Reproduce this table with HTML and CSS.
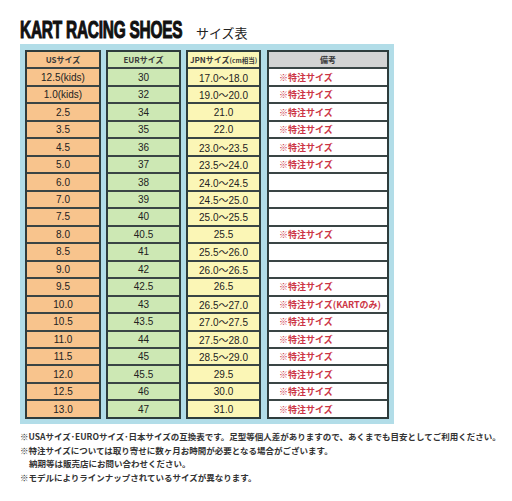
FILE: index.html
```html
<!DOCTYPE html>
<html lang="ja">
<head>
<meta charset="utf-8">
<title>KART RACING SHOES サイズ表</title>
<link rel="stylesheet" href="styles.css">
</head>
<body>
<div class="page">
  <div class="head">
    <h1 class="title"><span class="title-text">KART RACING SHOES</span></h1>
    <span class="sub">サイズ表</span>
  </div>
  <div class="frame">
    <div class="col us">
      <div class="cell hd">USサイズ</div>
      <div class="cell">12.5(kids)</div>
      <div class="cell">1.0(kids)</div>
      <div class="cell">2.5</div>
      <div class="cell">3.5</div>
      <div class="cell">4.5</div>
      <div class="cell">5.0</div>
      <div class="cell">6.0</div>
      <div class="cell">7.0</div>
      <div class="cell">7.5</div>
      <div class="cell">8.0</div>
      <div class="cell">8.5</div>
      <div class="cell">9.0</div>
      <div class="cell">9.5</div>
      <div class="cell">10.0</div>
      <div class="cell">10.5</div>
      <div class="cell">11.0</div>
      <div class="cell">11.5</div>
      <div class="cell">12.0</div>
      <div class="cell">12.5</div>
      <div class="cell">13.0</div>
    </div>
    <div class="col eur">
      <div class="cell hd">EURサイズ</div>
      <div class="cell">30</div>
      <div class="cell">32</div>
      <div class="cell">34</div>
      <div class="cell">35</div>
      <div class="cell">36</div>
      <div class="cell">37</div>
      <div class="cell">38</div>
      <div class="cell">39</div>
      <div class="cell">40</div>
      <div class="cell">40.5</div>
      <div class="cell">41</div>
      <div class="cell">42</div>
      <div class="cell">42.5</div>
      <div class="cell">43</div>
      <div class="cell">43.5</div>
      <div class="cell">44</div>
      <div class="cell">45</div>
      <div class="cell">45.5</div>
      <div class="cell">46</div>
      <div class="cell">47</div>
    </div>
    <div class="col jpn">
      <div class="cell hd">JPNサイズ<small>(cm相当)</small></div>
      <div class="cell">17.0〜18.0</div>
      <div class="cell">19.0〜20.0</div>
      <div class="cell">21.0</div>
      <div class="cell">22.0</div>
      <div class="cell">23.0〜23.5</div>
      <div class="cell">23.5〜24.0</div>
      <div class="cell">24.0〜24.5</div>
      <div class="cell">24.5〜25.0</div>
      <div class="cell">25.0〜25.5</div>
      <div class="cell">25.5</div>
      <div class="cell">25.5〜26.0</div>
      <div class="cell">26.0〜26.5</div>
      <div class="cell">26.5</div>
      <div class="cell">26.5〜27.0</div>
      <div class="cell">27.0〜27.5</div>
      <div class="cell">27.5〜28.0</div>
      <div class="cell">28.5〜29.0</div>
      <div class="cell">29.5</div>
      <div class="cell">30.0</div>
      <div class="cell">31.0</div>
    </div>
    <div class="col note">
      <div class="cell hd">備考</div>
      <div class="cell">※特注サイズ</div>
      <div class="cell">※特注サイズ</div>
      <div class="cell">※特注サイズ</div>
      <div class="cell">※特注サイズ</div>
      <div class="cell">※特注サイズ</div>
      <div class="cell">※特注サイズ</div>
      <div class="cell"></div>
      <div class="cell"></div>
      <div class="cell"></div>
      <div class="cell">※特注サイズ</div>
      <div class="cell"></div>
      <div class="cell"></div>
      <div class="cell">※特注サイズ</div>
      <div class="cell">※特注サイズ(KARTのみ)</div>
      <div class="cell">※特注サイズ</div>
      <div class="cell">※特注サイズ</div>
      <div class="cell">※特注サイズ</div>
      <div class="cell">※特注サイズ</div>
      <div class="cell">※特注サイズ</div>
      <div class="cell">※特注サイズ</div>
    </div>
  </div>
  <div class="notes">
    <p>※USAサイズ･EUROサイズ･日本サイズの互換表です。足型等個人差がありますので、あくまでも目安としてご利用ください。</p>
    <p>※特注サイズについては取り寄せに数ヶ月お時間が必要となる場合がございます。</p>
    <p class="indent">納期等は販売店にお問い合わせください。</p>
    <p>※モデルによりラインナップされているサイズが異なります。</p>
  </div>
</div>
</body>
</html>
```

FILE: styles.css
```css
html, body {
  margin: 0;
  padding: 0;
  background: #ffffff;
}

.page {
  padding: 18px 0 0 20px;
  font-family: "Liberation Sans", "Noto Sans CJK JP", sans-serif;
  color: #222;
}

.head {
  display: flex;
  align-items: baseline;
  height: 26px;
}

.title {
  margin: 0;
  width: 163px;
  flex: none;
  font-family: "Liberation Sans", sans-serif;
  font-weight: 700;
  font-size: 22px;
  line-height: 26px;
  color: #111;
  white-space: nowrap;
}

.title-text {
  display: inline-block;
  letter-spacing: -0.3px;
  -webkit-text-stroke: 1px #111;
  transform: scale(0.7, 1.05);
  transform-origin: left bottom;
}

.sub {
  margin-left: 13px;
  font-family: "Noto Sans CJK JP", sans-serif;
  font-size: 13px;
  color: #222;
}

.frame {
  width: 374px;
  background: #b2dde8;
  padding: 6px 6px 5px 5px;
  display: grid;
  grid-template-columns: 76px 75px 75px 123px;
  column-gap: 5px;
  box-sizing: border-box;
}

.col {
  display: flex;
  flex-direction: column;
  border: 2px solid #2e3c3c;
  height: 369px;
  box-sizing: border-box;
}

.us { background: #f8c48d; }
.eur { background: #cde8b4; }
.jpn { background: #fbf6b6; }
.note { background: #ffffff; margin-left: 1px; }

.cell {
  flex: 1;
  display: flex;
  align-items: center;
  justify-content: center;
  font-size: 10px;
  border-top: 2px solid #3a4545;
  white-space: nowrap;
  color: #222;
}

.cell:first-child {
  border-top: none;
}

.cell.hd {
  font-family: "Noto Sans CJK JP", sans-serif;
  font-size: 8px;
  font-weight: 700;
  color: #3a3a3a;
}

.cell.hd small {
  font-size: 6.5px;
}

.note .cell {
  justify-content: flex-start;
  padding-left: 10px;
  color: #cc3545;
  font-family: "Noto Sans CJK JP", sans-serif;
  font-size: 9px;
  font-weight: 700;
}

.note .cell.hd {
  justify-content: center;
  padding-left: 0;
  background: #d3d3d3;
  color: #3a3a3a;
  font-size: 8px;
}

.notes {
  margin-top: 6px;
  font-family: "Noto Sans CJK JP", sans-serif;
  font-size: 8.5px;
  font-weight: 700;
  color: #333;
}

.notes p {
  margin: 0;
  line-height: 13.5px;
  white-space: nowrap;
}

.notes .indent {
  padding-left: 9px;
}
```
